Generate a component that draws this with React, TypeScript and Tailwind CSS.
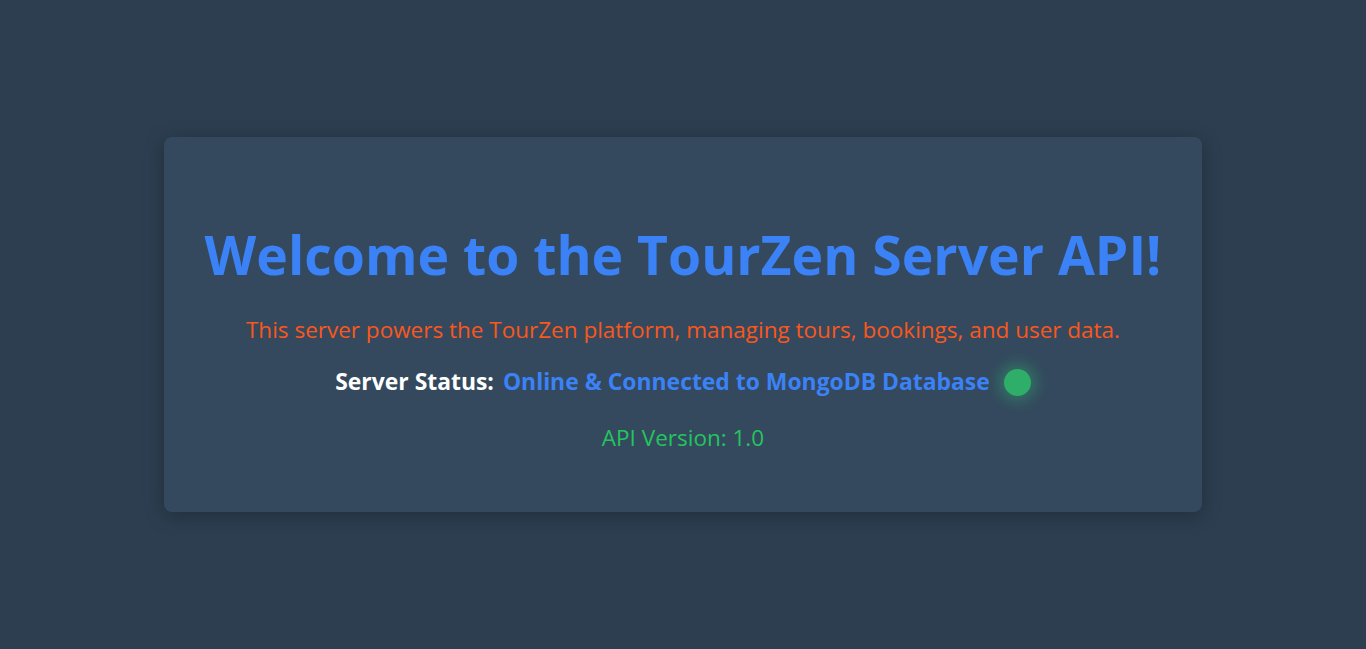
export default function App() {
  return (
    <div
      className="min-h-screen flex items-center justify-center bg-[#2c3e50]"
      style={{ fontFamily: '"Open Sans", "Noto Sans", sans-serif' }}
    >
      <div className="w-[1038px] h-[375px] rounded-lg bg-[#34495e] shadow-[0_4px_20px_rgba(0,0,0,0.25)] flex flex-col items-center text-center px-10 pt-[86px]">
        <h1 className="text-[53.5px] font-bold leading-[64px] text-[#3b82f6]">
          Welcome to the TourZen Server API!
        </h1>
        <p className="mt-[26px] text-[22.5px] leading-[34px] text-[#f9571c]">
          This server powers the TourZen platform, managing tours, bookings, and user data.
        </p>
        <div className="mt-[18px] flex items-center text-[22.9px] leading-[34px] font-bold">
          <span className="text-white">Server Status:</span>
          <span className="ml-[9px] text-[#3b82f6]">Online &amp; Connected to MongoDB Database</span>
          <span className="ml-[14px] w-[27px] h-[27px] rounded-full bg-[#2fae69] shadow-[0_0_14px_6px_rgba(46,204,113,0.3)]" />
        </div>
        <p className="mt-[22px] text-[22.5px] leading-[34px] text-[#22c55e]">API Version: 1.0</p>
      </div>
    </div>
  );
}
